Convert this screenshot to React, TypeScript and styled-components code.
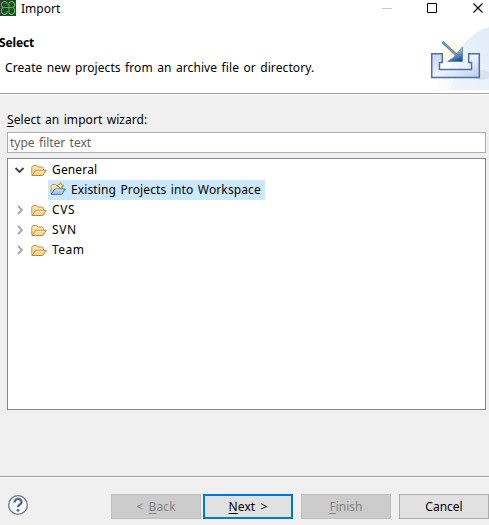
import React from "react";
import styled, { createGlobalStyle } from "styled-components";

const Global = createGlobalStyle`
  html, body { margin: 0; padding: 0; }
  body { overflow: hidden; background: #f0f0f0; }
  *, *::before, *::after { box-sizing: border-box; }
`;

const Dialog = styled.div`
  width: 489px;
  height: 525px;
  display: flex;
  flex-direction: column;
  overflow: hidden;
  background: #f0f0f0;
  color: #000;
  font: 12px/20px "Noto Sans", sans-serif;
  word-spacing: 1.2px;
  white-space: pre;
`;

const TitleBar = styled.header`
  height: 27px;
  flex: none;
  display: flex;
  background: #fff;
`;

const AppIcon = styled.svg`
  width: 16px;
  height: 16px;
  flex: none;
`;

const Label = styled.span<{ $track?: number }>`
  letter-spacing: ${(p) => p.$track ?? 0}px;
`;

const Title = styled.div`
  flex: 1;
  padding-left: 5px;
  line-height: 17px;
`;

const WindowControls = styled.svg`
  width: 119px;
  height: 20px;
  flex: none;
`;

const Banner = styled.section`
  height: 67px;
  flex: none;
  display: flex;
  justify-content: space-between;
  background: #fff;
  border-bottom: 1px solid #a0a0a0;
`;

const BannerText = styled.div`
  padding-top: 6px;
`;

const Heading = styled.h1`
  margin: 0 0 0 -1px;
  font-size: 12px;
  line-height: 20px;
  font-weight: 700;
`;

const Description = styled.p`
  margin: 5px 0 0 5px;
`;

const BannerArt = styled.svg`
  width: 62px;
  height: 63px;
  flex: none;
`;

const Body = styled.main`
  flex: 1;
  display: flex;
  flex-direction: column;
  padding: 15px 3px 0 7px;
  border-top: 1px solid #fff;
`;

const FieldLabel = styled.label`
  height: 22px;
  line-height: 20px;
`;

const Mnemonic = styled.span`
  text-decoration: underline;
  text-decoration-thickness: 1px;
  text-underline-offset: 2px;
  text-decoration-skip-ink: none;
`;

const FilterBox = styled.div`
  height: 21px;
  flex: none;
  border: 1px solid #abadb3;
  background: #fff;
  color: #606060;
  padding-left: 2px;
  line-height: 20px;
`;

const Tree = styled.ul`
  list-style: none;
  margin: 5px 0 0;
  padding: 1px 0 0 5px;
  height: 252px;
  flex: none;
  border: 1px solid #828790;
  background: #fff;
`;

const TreeRow = styled.li<{ $nested?: boolean }>`
  display: flex;
  align-items: center;
  height: 20px;
  padding-left: ${(p) => (p.$nested ? 35 : 0)}px;
`;

const Arrow = styled.svg`
  width: 13px;
  height: 16px;
  margin-right: 5px;
`;

const IconImage = styled.svg`
  width: 16px;
  height: 16px;
  flex: none;
`;

const RowText = styled.span`
  padding-left: 5px;
`;

const Selection = styled.div`
  width: 217px;
  height: 20px;
  display: flex;
  align-items: center;
  background: #cce8ff;
  padding-left: 2px;
`;

const Footer = styled.footer`
  height: 49px;
  flex: none;
  display: flex;
  align-items: flex-start;
  border-top: 1px solid #a0a0a0;
  box-shadow: inset 0 1px #fff;
  padding: 17px 0 0 7px;
`;

const HelpIcon = styled.svg`
  width: 22px;
  height: 22px;
  margin-right: 82px;
`;

const Button = styled.button<{ $primary?: boolean; $gap?: number }>`
  width: 90px;
  height: 25px;
  flex: none;
  margin: 0 0 0 ${(p) => p.$gap ?? 0}px;
  padding: 0;
  font: inherit;
  word-spacing: 2px;
  line-height: 22px;
  white-space: pre;
  color: #000;
  background: #e1e1e1;
  border: ${(p) => (p.$primary ? "2px solid #0078d7" : "1px solid #adadad")};
  &:disabled {
    color: #838383;
    background: #ccc;
    border-color: #bfbfbf;
  }
`;

const Folder = () => (
  <IconImage viewBox="0 0 16 16">
    <path d="M.8 13V5.200l1.200-1.700h3.500L7 5h4.500l1 1.500v2" fill="#fbe3ac" stroke="#c99446" />
    <path d="M1 13.500 4.700 8.300h10.500l-3.400 5.200z" fill="#fcdc92" stroke="#bd8138" />
    <path d="M5.300 9.300H13" stroke="#fff2c8" />
  </IconImage>
);

const ProjectFolder = () => (
  <IconImage viewBox="0 0 16 16">
    <path d="M1 11.500V4l1.200-1.500h3.500L7 4h4.500l1 1.500v2" fill="#f9e1a8" stroke="#b89a61" />
    <path d="M1 12.300 4.700 7h10.500l-3.400 5.300z" fill="#a9ccf5" stroke="#426cb1" />
    <path d="M5.300 8H13" stroke="#e2f1ff" />
    <path d="m10.500.6 1.100 2.100 2.100 1.100-2.100 1.100-1.100 2.100-1.100-2.100-2.100-1.100 2.100-1.100z" fill="#fff4a5" stroke="#a9832c" />
  </IconImage>
);

const Chevron = ({ open = false }: { open?: boolean }) => (
  <Arrow viewBox="0 0 13 16" fill="none">
    <path
      d={open ? "m2.5 6 4 4 4-4" : "m5 4 4 4-4 4"}
      stroke={open ? "#404040" : "#a6a6a6"}
      strokeWidth="1.8"
    />
  </Arrow>
);

const roots = [
  { name: "CVS", track: 0.6 },
  { name: "SVN", track: 0.6 },
  { name: "Team", track: 0.5 },
];

export default function App() {
  return (
    <>
      <Global />
      <Dialog>
        <TitleBar>
          <AppIcon viewBox="0 0 16 16">
            <path d="M0 0h16v16H0z" fill="#3b3541" />
            <path
              d="M7 4.500V3L5.500 1.500h-2L1.500 3.500V6L3 7.500 1.500 9v3.500l2 2h2L7 13v-2M3 7.500h10M9 3v10M9 3l1.500-1.500h2l2 2V6L13 7.500 14.500 9v3.500l-2 2h-2L9 13"
              fill="none"
              stroke="#16d51c"
              strokeWidth="1.200"
            />
          </AppIcon>
          <Title><Label>Import</Label></Title>
          <WindowControls viewBox="0 0 119 20" fill="none">
            <path d="M12 8.500h10" stroke="#c8c8c8" />
            <path d="M57.500 3.500h9v9h-9z" stroke="#000" />
            <path d="m103.500 3.500 9 9m0-9-9 9" stroke="#000" strokeWidth="1.100" />
          </WindowControls>
        </TitleBar>

        <Banner>
          <BannerText>
            <Heading><Label $track={-0.15}>Select</Label></Heading>
            <Description>
              <Label $track={0.09}>Create new projects from an archive file or directory.</Label>
            </Description>
          </BannerText>
          <BannerArt viewBox="0 0 62 63">
            <defs>
              <linearGradient id="sky" x1="0" x2="1" y1="1" y2="0.2">
                <stop offset="0" stopColor="#fff" />
                <stop offset="1" stopColor="#e2ebf8" />
              </linearGradient>
              <linearGradient id="tray" x1="0" x2="1" y1="0" y2="1">
                <stop offset="0" stopColor="#c4d3ec" />
                <stop offset=".5" stopColor="#edf4fc" />
                <stop offset="1" stopColor="#bccce7" />
              </linearGradient>
              <linearGradient id="arrowhead" x1="0.300" x2=".7" y1="0" y2="1">
                <stop offset="0.300" stopColor="#a9c0e2" />
                <stop offset="1" stopColor="#154b94" />
              </linearGradient>
              <radialGradient id="glow">
                <stop offset="0" stopColor="#fff9cc" />
                <stop offset="1" stopColor="#fff9cc" stopOpacity="0" />
              </radialGradient>
            </defs>
            <path d="M62 0C48 4 37 14 31 27 23 42 13 57 0 63h62z" fill="url(#sky)" />
            <path d="M62 10C48 16 38 27 32 40l-9 23h39z" fill="#e4edf9" opacity=".4" />
            <ellipse cx="26" cy="25" rx="13" ry="12" fill="url(#glow)" />
            <ellipse cx="54" cy="48" rx="9" ry="5" fill="#c4bed1" opacity=".3" />
            <path d="M4.700 26.700h10.600v8.800h-2.800v7h32v-7h-2.800v-8.800h10.600v23.800H4.700z" fill="url(#tray)" stroke="#4a70ae" strokeWidth="1.500" />
            <path d="m15.500 15 14 13" stroke="#5678ac" strokeWidth="2.500" />
            <path d="m16 15.500 13 12" stroke="#a9bedc" strokeWidth=".8" />
            <path d="M35.500 20v14.500H20.500l6-4 5-6z" fill="url(#arrowhead)" stroke="#5378ac" strokeWidth=".7" />
          </BannerArt>
        </Banner>

        <Body>
          <FieldLabel>
            <Label $track={0.06}><Mnemonic>S</Mnemonic>elect an import wizard:</Label>
          </FieldLabel>
          <FilterBox><Label>type filter text</Label></FilterBox>
          <Tree>
            <TreeRow>
              <Chevron open />
              <Folder />
              <RowText><Label $track={0.15}>General</Label></RowText>
            </TreeRow>
            <TreeRow $nested>
              <Selection>
                <ProjectFolder />
                <RowText><Label $track={0.12}>Existing Projects into Workspace</Label></RowText>
              </Selection>
            </TreeRow>
            {roots.map((root) => (
              <TreeRow key={root.name}>
                <Chevron />
                <Folder />
                <RowText><Label $track={root.track}>{root.name}</Label></RowText>
              </TreeRow>
            ))}
          </Tree>
        </Body>

        <Footer>
          <HelpIcon viewBox="0 0 22 22">
            <circle cx="11" cy="11" r="9.300" fill="#f8f9fb" stroke="#66758f" strokeWidth="1.300" />
            <path d="M7.500 8.500c0-5 7.500-4.500 7 0-.3 2-3.500 2-3.500 4.800" fill="none" stroke="#536687" strokeWidth="2.300" />
            <circle cx="11" cy="16.300" r="1.400" fill="#536687" />
          </HelpIcon>
          <Button disabled><Label $track={0.1}>{"< "}<Mnemonic>B</Mnemonic>ack</Label></Button>
          <Button $primary $gap={2}><Label $track={0.1}><Mnemonic>N</Mnemonic>{"ext >"}</Label></Button>
          <Button disabled $gap={8}><Label><Mnemonic>F</Mnemonic>inish</Label></Button>
          <Button $gap={8}><Label>Cancel</Label></Button>
        </Footer>
      </Dialog>
    </>
  );
}
